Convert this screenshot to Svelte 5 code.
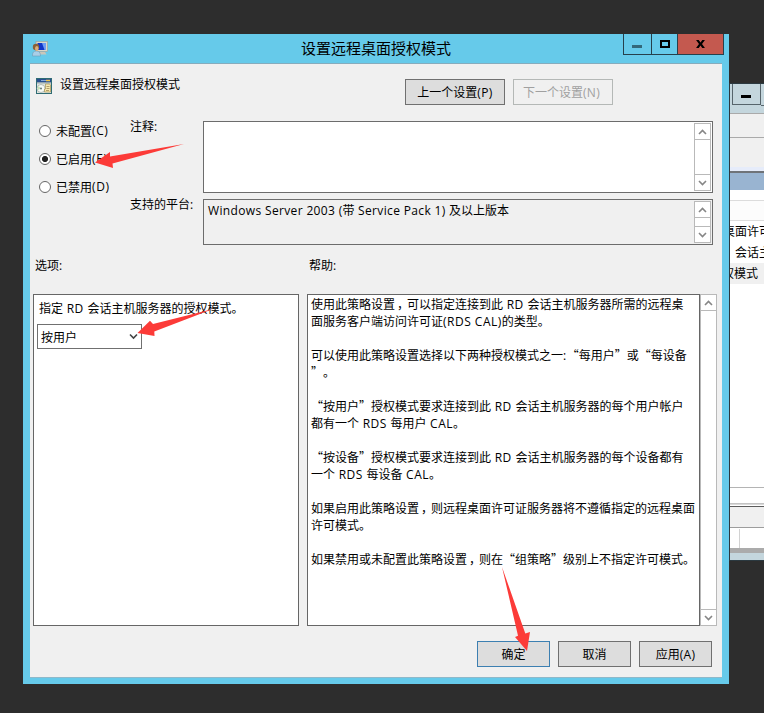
<script lang="ts">
	let selectedMode = $state('按用户');
	let policy = $state('enabled');

	const states = [
		{ value: 'unset', label: '未配置(C)' },
		{ value: 'enabled', label: '已启用(E)' },
		{ value: 'disabled', label: '已禁用(D)' },
	];

	const help = [
		'使用此策略设置，可以指定连接到此 RD 会话主机服务器所需的远程桌',
		'面服务客户端访问许可证(RDS CAL)的类型。',
		'',
		'可以使用此策略设置选择以下两种授权模式之一:“每用户”或“每设备',
		'”。',
		'',
		'“按用户”授权模式要求连接到此 RD 会话主机服务器的每个用户帐户',
		'都有一个 RDS 每用户 CAL。',
		'',
		'“按设备”授权模式要求连接到此 RD 会话主机服务器的每个设备都有',
		'一个 RDS 每设备 CAL。',
		'',
		'如果启用此策略设置，则远程桌面许可证服务器将不遵循指定的远程桌面',
		'许可模式。',
		'',
		'如果禁用或未配置此策略设置，则在“组策略”级别上不指定许可模式。',
	];

	// latin runs use a different face than the CJK text around them
	function runs(text: string) {
		return text.split(/([\x20-\x7e]+|，)/).filter(Boolean).map((t) => ({
			text: t,
			kind: t === '，' ? 'comma' : /^[\x20-\x7e]/.test(t) ? 'latin' : 'cjk',
		}));
	}

	function toggleMode() {
		selectedMode = selectedMode === '按用户' ? '按设备' : '按用户';
	}
</script>

{#snippet mixed(text: string)}{#each runs(text) as r}<span class={r.kind}>{r.text}</span>{/each}{/snippet}

{#snippet scrollbar()}
	<div class="scrollbar">
		<span class="sb-btn"><svg width="9" height="6" viewBox="0 0 9 6"><path d="M1 5 L4.5 1.5 L8 5" /></svg></span>
		<span class="sb-btn"><svg width="9" height="6" viewBox="0 0 9 6"><path d="M1 1 L4.5 4.5 L8 1" /></svg></span>
	</div>
{/snippet}

<div class="desktop">
	<div class="back-window">
		<div class="back-title"><span class="back-min"><i></i></span></div>
		<div class="back-menu"></div>
		<div class="back-tools"></div>
		<div class="back-caption"></div>
		<div class="back-head"></div>
		<ul class="back-list">
			<li>桌面许可</li>
			<li class="session">会话主</li>
			<li class="selected">权模式</li>
		</ul>
		<div class="back-rule"></div>
		<div class="back-tabs"></div>
		<div class="back-status"></div>
	</div>

	<div class="dialog">
		<header class="titlebar">
			<svg class="app-icon" width="16" height="16" viewBox="0 0 16 16">
				<rect x="4" y="0.5" width="11.5" height="10" fill="#dcd8c8" stroke="#9a9c98" stroke-width=".6" />
				<rect x="5.5" y="2" width="8.5" height="7" fill="#1236c8" />
				<path d="M10 2 h4 v7 h-1.500 z" fill="#6f9cf5" />
				<path d="M8 11 h5 l1.500 2.500 h-7 z" fill="#c9c6bb" />
				<path d="M.5 15 q-.5-5 4-5 q4 0 4 5 z" fill="#a8cfe8" stroke="#6b93ad" stroke-width=".5" />
				<circle cx="4" cy="6" r="3.200" fill="#8a6038" />
				<ellipse cx="4.800" cy="7.500" rx="1.800" ry="2.500" fill="#dcae7c" />
			</svg>
			<h1>设置远程桌面授权模式</h1>
			<div class="controls">
				<button class="min" aria-label="最小化"><i></i></button>
				<button class="max" aria-label="最大化"><i></i></button>
				<button class="close" aria-label="关闭">
					<svg width="9" height="8" viewBox="0 0 10 9"><path d="M0 0h3l2 2.700L7 0h3L6.700 4.500 10 9H7L5 6.200 3 9H0l3.300-4.500z" /></svg>
				</button>
			</div>
		</header>

		<main>
			<section class="heading">
				<svg width="16" height="16" viewBox="0 0 16 16">
					<rect width="16" height="16" fill="#2f6c74" />
					<rect x="1" y="1" width="14" height="14" fill="#dfe6e2" />
					<rect x="1" y="1" width="14" height="3.500" fill="#284f8f" />
					<path d="M5 2.500h5" stroke="#87a8d8" />
					<path d="M10 2.500h4" stroke="#f2c84b" stroke-width="1.500" />
					<path d="M1 5h14" stroke="#9daaa9" />
					<circle cx="5" cy="10.500" r="4" fill="#f7f9f5" stroke="#9da7a2" stroke-width=".7" />
					<path d="M5 10.500 L2.500 8 A4 4 0 0 0 2 12z" fill="#c3dfb4" />
					<circle cx="5" cy="10.500" r="1" fill="#637875" />
					<path d="M9.500 6h4l1 1v7h-6V11h1z" fill="#f7e8ae" stroke="#a69258" stroke-width=".7" />
					<path d="M10.500 8.500h3M10.500 10.500h3M10 12.500h3" stroke="#a28b58" stroke-width=".8" />
				</svg>
				<span class="name">设置远程桌面授权模式</span>
				<button class="btn prev">{@render mixed('上一个设置(P)')}</button>
				<button class="btn next" disabled>{@render mixed('下一个设置(N)')}</button>
			</section>

			<section class="settings">
				<div class="radios">
					{#each states as s}
						<button class="radio" role="radio" aria-checked={policy === s.value} onclick={() => (policy = s.value)}>
							<i class:checked={policy === s.value}></i>{@render mixed(s.label)}
						</button>
					{/each}
				</div>
				<div class="labels">
					<div class="note">{@render mixed('注释:')}</div>
					<div>{@render mixed('支持的平台:')}</div>
				</div>
				<div class="fields">
					<div class="field comment">
						<span></span>
						{@render scrollbar()}
					</div>
					<div class="field platform">
						<span>{@render mixed('Windows Server 2003 (带 Service Pack 1) 及以上版本')}</span>
						{@render scrollbar()}
					</div>
				</div>
			</section>

			<section class="captions">
				<span>{@render mixed('选项:')}</span>
				<span>{@render mixed('帮助:')}</span>
			</section>

			<section class="panes">
				<div class="options">
					<div class="opt-label">{@render mixed('指定 RD 会话主机服务器的授权模式。')}</div>
					<button class="combo" onclick={toggleMode}>
						<span>{selectedMode}</span>
						<svg width="9" height="7" viewBox="0 0 9 7"><path d="M1 1.500 L4.500 5 L8 1.500" /></svg>
					</button>
				</div>
				<div class="help">
					<div class="help-text">
						{#each help as line}
							<p>{@render mixed(line)}</p>
						{/each}
					</div>
					{@render scrollbar()}
				</div>
			</section>

			<footer>
				<button class="btn ok">确定</button>
				<button class="btn">取消</button>
				<button class="btn">{@render mixed('应用(A)')}</button>
			</footer>
		</main>
	</div>

	<svg class="arrows" width="764" height="713" viewBox="0 0 764 713">
		<path d="M95 162.500 L110 152 L110 156.500 L184 144 L112.500 163.500 L113 168 Z" />
		<path d="M137.500 333 L150 320.700 L153 324 L213 309 L154.300 331.500 L154.500 336 Z" />
		<path d="M502 567 L525.300 633.500 L530 632 L527 651 L515 637 L518 635.700 Z" />
	</svg>
</div>

<style>
	:global(body) {
		margin: 0;
		background: #2d2d2d;
	}
	.desktop {
		position: relative;
		width: 764px;
		height: 713px;
		overflow: hidden;
		background: #2d2d2d;
		color: #000;
		font-family: "Noto Sans CJK SC", sans-serif;
		font-size: 12px;
		line-height: 17px;
		white-space: nowrap;
		text-spacing-trim: space-all;
	}
	.desktop * {
		box-sizing: border-box;
	}
	button {
		font: inherit;
		color: inherit;
		padding: 0;
		margin: 0;
		border: 0;
		background: none;
	}
	.latin {
		font-family: "Open Sans", sans-serif;
		letter-spacing: 0.35px;
		line-height: 0;
		white-space: pre;
	}
	/* fullwidth comma sits nearer the middle of its cell */
	.comma {
		padding-left: 2px;
		letter-spacing: -2px;
	}

	/* window behind the dialog */
	.back-window {
		position: absolute;
		left: 729px;
		top: 83px;
		width: 35px;
		height: 478px;
		display: flex;
		flex-direction: column;
		overflow: hidden;
		background: #fff;
		border: solid #2b3940;
		border-width: 1px 0 1px 1px;
	}
	.back-title {
		display: flex;
		height: 29px;
		padding-left: 2px;
		background: #c4d6dd;
	}
	.back-title::after {
		content: "";
		flex: 1;
		height: 21px;
		border-bottom: 1px solid #56646b;
	}
	.back-min {
		display: flex;
		width: 29px;
		height: 21px;
		border: 1px solid #56646b;
		border-top: 0;
		padding: 11px 0 0 8px;
	}
	.back-min i {
		width: 10px;
		height: 3px;
		background: #000;
	}
	.back-menu {
		height: 25px;
		background: #f0f0f0;
		border: solid #aaa;
		border-width: 1px 0;
	}
	.back-tools {
		height: 35px;
		background: #f0f0f0;
		border-bottom: 2px solid #6f7378;
		box-shadow: inset 0 -4px #e6ecfa;
	}
	.back-caption {
		height: 17px;
		background: #99b4d1;
	}
	.back-head {
		height: 31px;
		border-bottom: 1px solid #dcdcdc;
		background: linear-gradient(#fff 10px, #dcdcdc 10px, #dcdcdc 11px, #fcfcfc 11px);
	}
	.back-list {
		list-style: none;
		margin: 0;
		padding: 0;
		height: 267px;
	}
	.back-list li {
		height: 21px;
		line-height: 20px;
		text-indent: -7px;
	}
	.back-list .session {
		text-indent: 5px;
	}
	.back-list .selected {
		background: #f0f0f0;
		text-indent: -8px;
	}
	.back-rule {
		height: 19px;
		border-top: 1px solid #b4b4b4;
		border-bottom: 1px solid #fff;
		background: linear-gradient(#fff 15px, #b8b8b8 15px, #e4e4e4 17px, #fff 17px);
	}
	.back-tabs {
		height: 22px;
		border-top: 1px solid #5c5c5c;
		border-bottom: 1px solid #9d9d9d;
		background: #f0f0f0;
	}
	.back-status {
		height: 32px;
		border-bottom: 7px solid #c4d6dd;
		background:
			linear-gradient(#ababab, #ababab) 0 20px / 100% 5px no-repeat,
			linear-gradient(#d2d2d2, #d2d2d2) 9px 1px / 1px 19px no-repeat;
	}

	/* dialog */
	.dialog {
		position: absolute;
		left: 23px;
		top: 34px;
		width: 706px;
		height: 650px;
		padding: 0 7px 6px 7px;
		background: #66caea;
	}
	.titlebar {
		display: grid;
		grid-template-columns: 100px 1fr 101px;
		height: 29px;
		margin-right: -2px;
	}
	.app-icon {
		margin: 7px 0 0 2px;
	}
	h1 {
		margin: 0;
		padding-right: 1px;
		font-size: 15px;
		font-weight: 400;
		line-height: 27px;
		text-align: center;
	}
	.controls {
		display: flex;
		height: 21px;
		border: 1px solid #26404c;
		border-top: 0;
	}
	.controls button {
		display: flex;
		align-items: center;
		justify-content: center;
	}
	.controls .min {
		width: 28px;
		border-right: 1px solid #26404c;
	}
	.min i {
		width: 10px;
		height: 3px;
		margin: 5px 2px 0 0;
		background: #33687a;
	}
	.controls .max {
		width: 26px;
		border-right: 1px solid #26404c;
	}
	.max i {
		width: 10px;
		height: 8px;
		border: 2px solid #000;
	}
	.controls .close {
		flex: 1;
		background: #c4594f;
	}
	main {
		display: flex;
		flex-direction: column;
		width: 692px;
		height: 615px;
		padding: 15px 5px 10px 3px;
		background: #f0f0f0;
		border-top: 1px solid #86acbd;
		border-bottom: 1px solid #8fb9ca;
	}
	.btn {
		width: 73px;
		height: 26px;
		padding-bottom: 2px;
		border: 1px solid #707070;
		background: #ddd;
	}
	.heading {
		display: flex;
		align-items: flex-start;
		height: 42px;
		padding-left: 3px;
	}
	.heading svg {
		margin-top: -1px;
	}
	.name {
		width: 345px;
		margin: -4px 0 0 8px;
	}
	.heading .btn {
		width: 100px;
		margin-right: 8px;
	}
	.heading .next {
		padding-right: 3px;
		color: #a0a0a0;
		border-color: #b4b8b6;
		background: #f0f0f0;
	}
	.settings {
		display: flex;
		height: 134px;
	}
	.radios {
		display: flex;
		flex-direction: column;
		width: 97px;
		padding: 1px 0 0 6px;
	}
	.radio {
		display: flex;
		align-items: center;
		height: 17px;
		margin-bottom: 11px;
	}
	.radio .latin {
		line-height: 17px;
		letter-spacing: 0.6px;
	}
	.radio i {
		display: flex;
		width: 12px;
		height: 12px;
		margin-right: 5px;
		border: 1px solid #666;
		border-radius: 50%;
		background: #fff;
	}
	.radio i.checked {
		background: radial-gradient(circle, #222 2.7px, #fff 3.4px);
	}
	.labels {
		width: 73px;
	}
	.note {
		height: 78px;
		margin-top: -4px;
	}
	.field {
		display: flex;
		justify-content: space-between;
		width: 510px;
		padding: 1px;
		border: 1px solid #6c6c6c;
	}
	.field > span {
		padding-left: 3px;
	}
	.comment {
		height: 72px;
		margin-bottom: 6px;
		background: #fff;
	}
	.platform {
		height: 46px;
	}
	.scrollbar {
		display: flex;
		flex-direction: column;
		justify-content: space-between;
		width: 17px;
		border: 1px solid #b9b9b9;
		background: #fff;
	}
	.sb-btn {
		display: flex;
		align-items: center;
		justify-content: center;
		height: 16px;
		border-bottom: 1px solid #b9b9b9;
	}
	.sb-btn:last-child {
		border-top: 1px solid #b9b9b9;
		border-bottom: 0;
	}
	.sb-btn path,
	.combo path {
		fill: none;
		stroke: #868686;
		stroke-width: 1.6;
	}
	.captions {
		display: grid;
		grid-template-columns: 274px 1fr;
		height: 39px;
		padding: 1px 0 0 2px;
	}
	.panes {
		display: flex;
		gap: 8px;
		height: 332px;
	}
	.options {
		width: 266px;
		padding: 4px 3px;
		background: #fff;
		border: 1px solid #666;
	}
	.opt-label {
		height: 25px;
		padding-left: 2px;
	}
	.options .latin,
	.help .latin {
		letter-spacing: 0.5px;
	}
	.combo {
		display: flex;
		align-items: center;
		justify-content: space-between;
		width: 105px;
		height: 25px;
		padding: 0 3px 1px 3px;
		border: 1px solid #707070;
		background: #fff;
	}
	.combo path {
		stroke: #444;
	}
	.help {
		display: flex;
	}
	.help-text {
		width: 393px;
		padding: 0 3px;
		background: #fff;
		border: 1px solid #666;
	}
	p {
		height: 17px;
		margin: 0;
	}
	footer {
		display: flex;
		justify-content: flex-end;
		gap: 8px;
		padding: 15px 5px 0 0;
	}
	.ok {
		border-color: #3c7fb1;
	}
	.arrows {
		position: absolute;
		left: 0;
		top: 0;
		pointer-events: none;
		fill: #fc3b38;
	}
</style>
